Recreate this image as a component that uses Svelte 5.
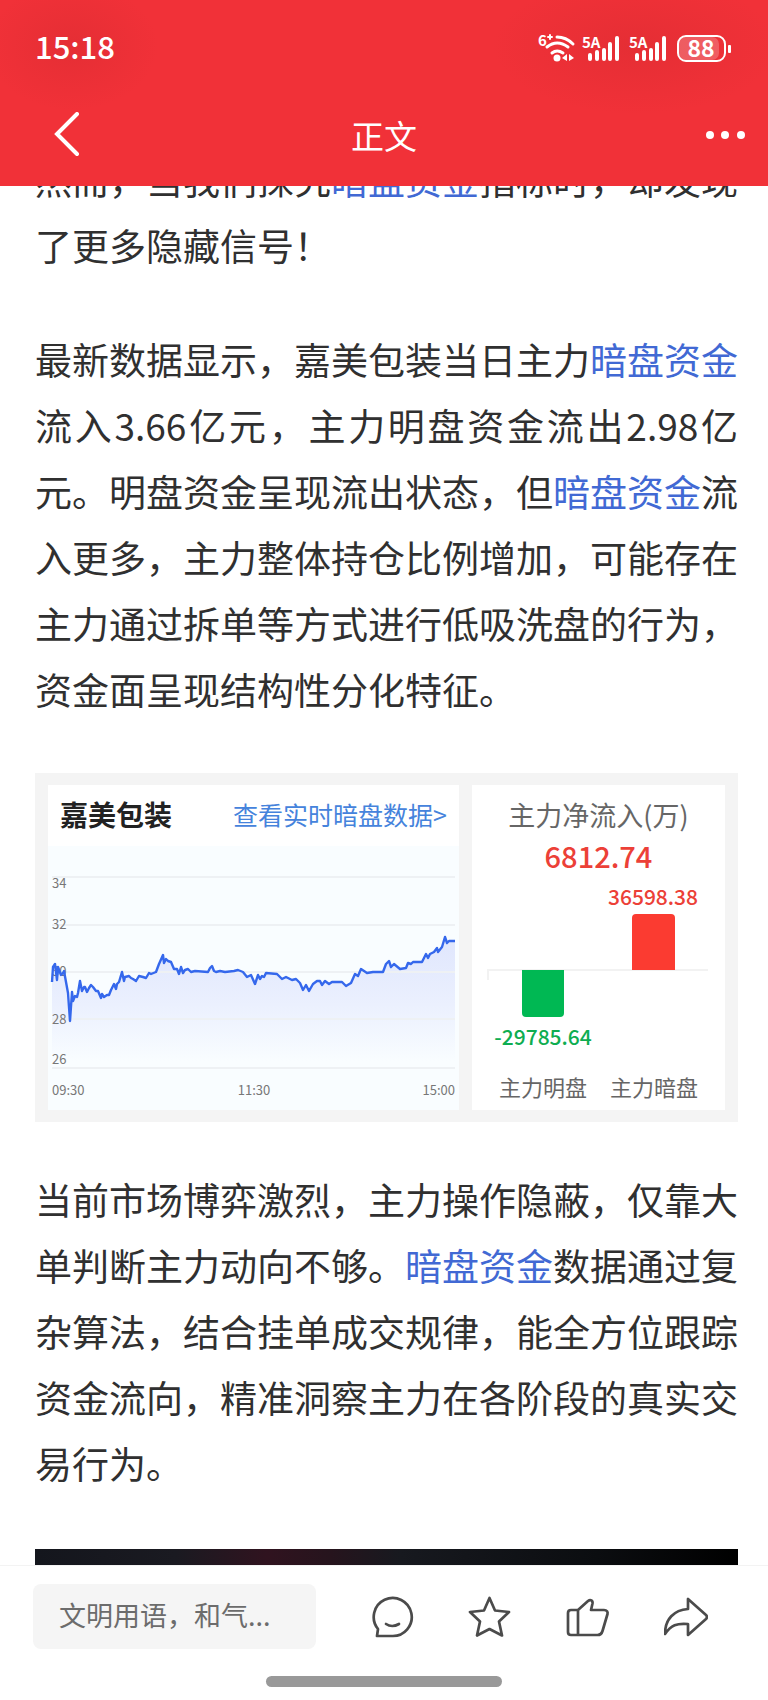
<script lang="ts">
  type Point = [number, number];

  const prices: Point[] = [
    [4, 136], [5, 121], [7, 118], [9, 134], [10, 121], [13, 129], [15, 127], [16, 125],
    [18, 136], [20, 147], [22, 175], [24, 146], [25, 155], [27, 150], [29, 151], [30, 147],
    [32, 135], [34, 145], [36, 141], [37, 141], [39, 146], [41, 142], [43, 139], [45, 141],
    [48, 145], [50, 145], [53, 152], [54, 148], [56, 151], [59, 149], [61, 149], [63, 144],
    [66, 138], [68, 143], [69, 138], [71, 136], [74, 126], [76, 135], [77, 131], [81, 130],
    [83, 132], [85, 133], [88, 135], [91, 130], [95, 131], [98, 132], [101, 127], [103, 128],
    [108, 126], [111, 118], [115, 109], [116, 117], [118, 113], [120, 115], [123, 116],
    [126, 123], [129, 123], [131, 128], [133, 121], [135, 127], [137, 124], [140, 123],
    [143, 126], [147, 125], [160, 126], [162, 122], [164, 120], [166, 125], [168, 126],
    [172, 125], [177, 126], [186, 125], [190, 124], [195, 126], [199, 131], [203, 129],
    [207, 138], [210, 129], [212, 133], [214, 130], [216, 131], [218, 127], [229, 128],
    [234, 133], [238, 131], [244, 134], [248, 133], [252, 137], [255, 144], [258, 139],
    [261, 145], [265, 138], [269, 135], [272, 135], [274, 139], [277, 135], [281, 138],
    [284, 136], [294, 136], [298, 140], [303, 137], [307, 128], [310, 130], [313, 123],
    [319, 127], [325, 126], [335, 126], [338, 118], [341, 115], [343, 121], [346, 118],
    [352, 123], [358, 122], [360, 117], [363, 118], [365, 116], [374, 116], [378, 108],
    [380, 112], [382, 108], [386, 106], [389, 102], [390, 106], [394, 101], [397, 91],
    [399, 97], [401, 95], [407, 95],
  ];

  const gridLines = [31, 79, 126, 173, 222];

  const priceLabels = [
    { text: "34", y: 42 },
    { text: "32", y: 83 },
    { text: "30", y: 130 },
    { text: "28", y: 178 },
    { text: "26", y: 218 },
  ];

  const line = prices.map(([x, y]) => `${x},${y}`).join(" ");
  const area = `4,222 ${line} 407,222`;

  let comment = $state("");
</script>

{#snippet signal()}
  <svg class="status-icon" width="40" height="30" viewBox="0 0 40 30" aria-hidden="true">
    <text class="network" x="0" y="15">5A</text>
    <path class="bars" d="M8 22v4M15 19v7M22 17v9M28 11v15M35 5v21" />
  </svg>
{/snippet}

<div class="screen">
  <header>
    <div class="status">
      <time>15:18</time>
      <div class="status-icons">
        <svg class="status-icon" width="37" height="30" viewBox="0 0 37 30" aria-hidden="true">
          <text class="network" x="0" y="13">6</text>
          <path class="thin" d="M10 4h4M12 2v4" />
          <path class="arc" d="M19 4Q28 4 35 11M9 14Q19 6 30 14M14 20Q19 16 25 20" />
          <circle cx="19" cy="25" r="3.500" fill="#fff" />
          <path d="M24 25l5-4v7zM31 21l5 4-5 3z" fill="#fff" />
        </svg>
        {@render signal()}
        {@render signal()}
        <svg class="status-icon" width="56" height="30" viewBox="0 0 56 30" aria-hidden="true">
          <rect class="charge" x="3" y="4" width="40" height="23" rx="7" />
          <rect class="shell" x="2" y="3" width="47" height="25" rx="8" />
          <rect x="52" y="12" width="3" height="8" rx="1" fill="#fff" />
          <text class="level" x="25" y="24">88</text>
        </svg>
      </div>
    </div>
    <nav>
      <button type="button" aria-label="返回">
        <svg width="30" height="46" viewBox="0 0 30 46">
          <path class="chevron" d="M25 2L5 22l20 20" />
        </svg>
      </button>
      <h1>正文</h1>
      <button type="button" aria-label="更多">
        <svg width="42" height="46" viewBox="0 0 42 46" fill="#fff">
          <circle cx="6" cy="23" r="4" />
          <circle cx="21" cy="23" r="4" />
          <circle cx="37" cy="23" r="4" />
        </svg>
      </button>
    </nav>
  </header>

  <main>
    <article>
      <p>
        然而，当我们探究<a href="#anpan">暗盘资金</a>指标时，却发现了更多隐藏信号！
      </p>
      <p>
        最新数据显示，嘉美包装当日主力<a href="#anpan">暗盘资金</a>流入3.66亿元，主力明盘资金流出2.98亿元。明盘资金呈现流出状态，但<a href="#anpan">暗盘资金</a>流入更多，主力整体持仓比例增加，可能存在主力通过拆单等方式进行低吸洗盘的行为，资金面呈现结构性分化特征。
      </p>

      <figure class="card">
        <section class="panel">
          <div class="panel-head">
            <h2>嘉美包装</h2>
            <a href="#realtime">查看实时暗盘数据&gt;</a>
          </div>
          <svg class="trend" viewBox="0 0 411 264" role="img" aria-label="嘉美包装">
            <defs>
              <linearGradient id="fade" gradientUnits="userSpaceOnUse" x1="0" y1="90" x2="0" y2="215">
                <stop offset="0" stop-color="#dfe6fd" />
                <stop offset="0.55" stop-color="#ebf0fe" />
                <stop offset="1" stop-color="#f9fdff" />
              </linearGradient>
            </defs>
            <polygon points={area} fill="url(#fade)" />
            {#each gridLines as y}
              <line class="grid" x1="4" x2="407" y1={y} y2={y} />
            {/each}
            {#each priceLabels as label}
              <text x="4" y={label.y}>{label.text}</text>
            {/each}
            <polyline points={line} />
            <text x="4" y="249">09:30</text>
            <text x="206" y="249" text-anchor="middle">11:30</text>
            <text x="407" y="249" text-anchor="end">15:00</text>
          </svg>
        </section>

        <section class="panel flow">
          <h3>主力净流入(万)</h3>
          <strong>6812.74</strong>
          <svg viewBox="0 0 253 215" role="img" aria-label="主力净流入">
            <path class="axis" d="M16 85V75H236" />
            <path d="M50 75h42v43q0 4-4 4H54q-4 0-4-4z" fill="#00b853" />
            <path d="M160 75V23q0-4 4-4h35q4 0 4 4v52z" fill="#fb3b31" />
            <text class="up" x="181" y="10">36598.38</text>
            <text class="down" x="71" y="150">-29785.64</text>
            <text x="71" y="201">主力明盘</text>
            <text x="182" y="201">主力暗盘</text>
          </svg>
        </section>
      </figure>

      <p>
        当前市场博弈激烈，主力操作隐蔽，仅靠大单判断主力动向不够。<a href="#anpan">暗盘资金</a>数据通过复杂算法，结合挂单成交规律，能全方位跟踪资金流向，精准洞察主力在各阶段的真实交易行为。
      </p>

      <div class="banner"></div>
    </article>
  </main>

  <footer>
    <div class="toolbar">
      <input type="text" aria-label="评论" placeholder="文明用语，和气..." bind:value={comment} />
      <button type="button" aria-label="查看评论">
        <svg class="action" viewBox="0 0 44 44">
          <path d="M7 41h15A19 19 0 1 0 8 34z" />
          <path d="M16 29q6 4 13 0" />
        </svg>
      </button>
      <button type="button" aria-label="收藏">
        <svg class="action" viewBox="0 0 44 44">
          <path d="M21.500 3L27 15.500l14 1.500-10 9.500 3 14-12.500-6.500L9 40.500l3-14L2 17l14-1.500z" />
        </svg>
      </button>
      <button type="button" aria-label="点赞">
        <svg class="action" viewBox="0 0 44 44">
          <path d="M12 15L22 6c2.500-2 5-.5 4.500 2.500L25 15h13c3 0 4 2 3.500 4l-5 17c-.7 2.500-2.500 4-5 4H5c-2 0-3-1-3-3V18c0-2 1-3 3-3zM12 15v25" />
        </svg>
      </button>
      <button type="button" aria-label="分享">
        <svg class="action" viewBox="0 0 44 44">
          <path d="M24 4v10C10 15 1 24 1 39c6-9 12-11 23-10v11l18-16q2-2 0-4z" />
        </svg>
      </button>
    </div>
    <div class="home-bar"></div>
  </footer>
</div>

<style>
  :global(body) {
    background: #fff;
  }

  .screen {
    color: #303030;
    display: flex;
    flex-direction: column;
    font-family: "Noto Sans CJK SC", "Noto Sans", sans-serif;
    height: 100vh;
    overflow: hidden;
  }

  header {
    background:
      radial-gradient(ellipse 96px 72px at 72px 46px, rgba(205, 40, 45, 0.34), rgba(205, 40, 45, 0) 90%),
      radial-gradient(ellipse 160px 76px at calc(100% - 132px) 46px, rgba(205, 40, 45, 0.34), rgba(205, 40, 45, 0) 90%),
      #f13138;
    color: #fff;
    flex: none;
    padding-bottom: 12px;
    position: relative;
    z-index: 1;
  }

  .status {
    align-items: center;
    display: flex;
    height: 96px;
    justify-content: space-between;
    padding: 0 36px 0 35px;
  }

  time {
    font-size: 31px;
    font-weight: 500;
    line-height: 40px;
    padding-bottom: 4px;
  }

  .status-icons {
    display: flex;
    gap: 7px;
  }

  .status-icon {
    display: block;
    overflow: visible;
  }

  .network {
    fill: #fff;
    font-size: 15px;
    font-weight: 700;
  }

  .bars,
  .arc,
  .thin,
  .shell,
  .chevron {
    fill: none;
    stroke: #fff;
    stroke-linecap: round;
    stroke-width: 4;
  }

  .arc {
    stroke-width: 3;
  }

  .thin,
  .shell {
    stroke-width: 2;
  }

  .charge {
    fill: rgba(255, 255, 255, 0.22);
  }

  .level {
    fill: #fff;
    font-size: 23px;
    font-weight: 700;
    text-anchor: middle;
  }

  nav {
    align-items: center;
    display: flex;
    height: 78px;
    justify-content: space-between;
    padding: 0 22px 0 52px;
  }

  nav button {
    flex: 1;
    text-align: left;
  }

  nav button:last-child {
    padding-left: 30px;
    text-align: right;
  }

  nav button svg {
    display: inline-block;
    vertical-align: middle;
  }

  h1 {
    font-size: 33px;
    font-weight: 400;
    line-height: 44px;
    margin: 0;
  }

  button {
    background: none;
    border: 0;
    color: inherit;
    cursor: pointer;
    font: inherit;
    padding: 0;
  }

  main {
    flex: 1;
    min-height: 0;
    overflow: hidden;
  }

  article {
    margin-top: -40px;
    padding: 0 30px 0 35px;
  }

  p {
    font-size: 37px;
    line-height: 66px;
    margin: 0 0 48px;
    text-align: justify;
  }

  a {
    color: #4169d4;
    text-decoration: none;
  }

  .card {
    background: #f4f4f4;
    display: grid;
    gap: 13px;
    grid-template-columns: 411fr 253fr;
    margin: 51px 0 44px;
    padding: 12px 13px;
  }

  .panel {
    background: #fff;
    min-width: 0;
  }

  .panel-head {
    align-items: center;
    box-sizing: border-box;
    display: flex;
    height: 61px;
    justify-content: space-between;
    padding: 0 12px 3px;
  }

  h2 {
    color: #222;
    font-size: 28px;
    font-weight: 700;
    margin: 0;
  }

  .panel-head a {
    color: #4583dc;
    font-size: 25px;
  }

  .panel svg {
    display: block;
    width: 100%;
  }

  .trend {
    background: #f9fdff;
  }

  .trend text {
    fill: #777;
    font-size: 13px;
  }

  .trend polyline {
    fill: none;
    stroke: #3568ec;
    stroke-linejoin: round;
    stroke-width: 2.400;
  }

  .grid {
    stroke: #eef1f4;
    stroke-width: 2;
  }

  .flow {
    text-align: center;
  }

  h3 {
    color: #666;
    font-size: 27px;
    font-weight: 400;
    line-height: 36px;
    margin: 0;
    padding-top: 12px;
  }

  strong {
    color: #ec4037;
    display: block;
    font-size: 29px;
    font-weight: 500;
    line-height: 44px;
    margin-bottom: 18px;
  }

  .flow svg {
    overflow: visible;
  }

  .flow text {
    fill: #666;
    font-size: 22px;
    text-anchor: middle;
  }

  .flow .up,
  .flow .down {
    font-size: 21px;
    font-weight: 500;
  }

  .flow .up {
    fill: #ec4037;
  }

  .flow .down {
    fill: #0ead51;
  }

  .axis {
    fill: none;
    stroke: #f2f2f2;
    stroke-width: 2;
  }

  .banner {
    background: linear-gradient(90deg, #14161d, #1a1a21 20%, #30131f 33%, #26141d 42%, #17191f 52%, #0b0d10 80%, #000);
    height: 360px;
    margin-top: 53px;
  }

  footer {
    background: #fff;
    border-top: 1px solid #f3f3f3;
    flex: none;
    padding: 18px 0 13px;
  }

  .toolbar {
    align-items: center;
    display: flex;
    gap: 54px;
    padding: 0 60px 0 33px;
  }

  input {
    background: #f5f5f5;
    border: 0;
    border-radius: 8px;
    box-sizing: border-box;
    color: #303030;
    flex: 1;
    font: inherit;
    font-size: 27px;
    height: 65px;
    min-width: 0;
    padding: 0 26px 4px;
  }

  input::placeholder {
    color: #6c6c6c;
    opacity: 1;
  }

  .action {
    display: block;
    fill: none;
    height: 44px;
    stroke: #4b4b4b;
    stroke-linecap: round;
    stroke-linejoin: round;
    stroke-width: 2.700;
    width: 44px;
  }

  .home-bar {
    background: #999;
    border-radius: 6px;
    height: 11px;
    margin: 27px auto 0;
    width: 236px;
  }
</style>
